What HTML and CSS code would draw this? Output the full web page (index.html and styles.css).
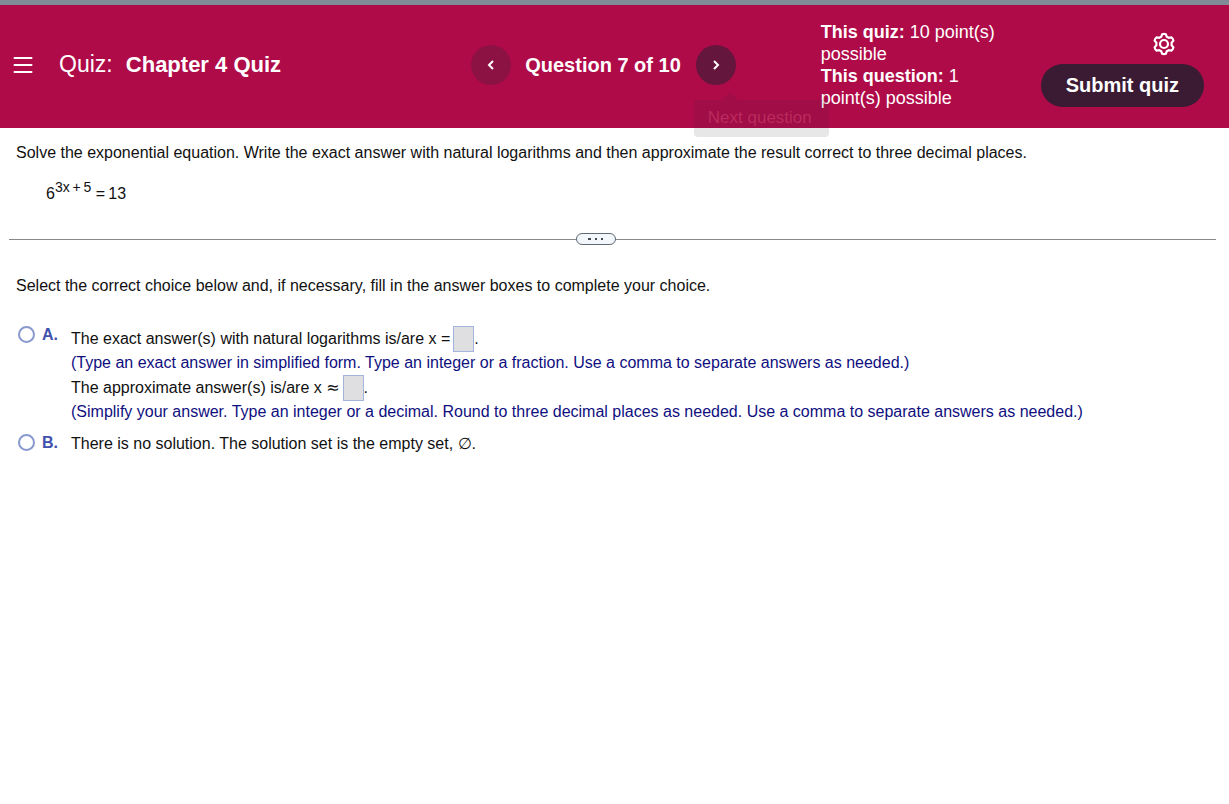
FILE: index.html
```html
<!DOCTYPE html>
<html lang="en">
<head>
<meta charset="utf-8">
<meta name="viewport" content="width=device-width, initial-scale=1">
<title>Chapter 4 Quiz</title>
<link rel="stylesheet" href="styles.css">
</head>
<body>
<header class="header">
  <div class="heading">
    <button class="icon-button menu" type="button" aria-label="Menu">
      <svg width="20" height="18" viewBox="0 0 20 18" fill="none" stroke="currentColor" stroke-width="2" stroke-linecap="round"><path d="M1.5 2h17M1.5 9h17M1.5 16h17"/></svg>
    </button>
    <h1 class="title"><span class="kind">Quiz:</span> Chapter 4 Quiz</h1>
  </div>
  <nav class="pager" aria-label="Questions">
    <button class="round previous" type="button" aria-label="Previous question">
      <svg width="10" height="12" viewBox="0 0 10 12" fill="none" stroke="currentColor" stroke-width="2"><path d="M7 2 3 6l4 4"/></svg>
    </button>
    <span class="position">Question 7 of 10</span>
    <div class="next-wrap">
      <button class="round" type="button" aria-label="Next question">
        <svg width="10" height="12" viewBox="0 0 10 12" fill="none" stroke="currentColor" stroke-width="2"><path d="m3 2 4 4-4 4"/></svg>
      </button>
      <div class="tooltip" role="tooltip">Next question</div>
    </div>
  </nav>
  <div class="side">
    <div class="points">
      <div><b>This quiz:</b> 10 point(s) possible</div>
      <div><b>This question:</b> 1 point(s) possible</div>
    </div>
    <div class="actions">
      <button class="icon-button settings" type="button" aria-label="Settings">
        <svg width="24" height="24" viewBox="0 0 24 24" fill="none" stroke="currentColor" stroke-width="2.2" stroke-linejoin="round"><circle cx="12" cy="12" r="4"/><path d="M10.2 2.2Q12 1.6 13.8 2.2L14.8 4.8 16.6 5.8 19.4 5.4Q21 6.6 21.4 8.6L19.6 10.8V13.2L21.4 15.4Q21 17.4 19.4 18.6L16.6 18.2 14.8 19.2 13.8 21.8Q12 22.4 10.2 21.8L9.2 19.2 7.4 18.2 4.6 18.6Q3 17.4 2.6 15.4L4.4 13.2V10.8L2.6 8.6Q3 6.6 4.6 5.4L7.4 5.8 9.2 4.8Z"/></svg>
      </button>
      <button class="submit" type="button">Submit quiz</button>
    </div>
  </div>
</header>
<main>
  <section class="problem">
    <p>Solve the exponential equation. Write the exact answer with natural logarithms and then approximate the result correct to three decimal places.</p>
    <p class="equation">6<sup>3x&#8201;+&#8201;5</sup> =&#8201;13</p>
  </section>
  <div class="divider">
    <button class="handle" type="button" aria-label="Resize panels">
      <svg width="16" height="4" viewBox="0 0 16 4" fill="currentColor"><rect x="0" y="1" width="3" height="2"/><rect x="7" y="1" width="2" height="2"/><rect x="13" y="1" width="2" height="2"/></svg>
    </button>
  </div>
  <section class="answers">
    <p>Select the correct choice below and, if necessary, fill in the answer boxes to complete your choice.</p>
    <div class="choice">
      <input class="radio" type="radio" name="choice" id="a">
      <label class="letter" for="a">A.</label>
      <div class="body">
        <div class="entry"><label for="exact">The exact answer(s) with natural logarithms is/are x =</label><input class="blank" id="exact" type="text">.</div>
        <div class="hint">(Type an exact answer in simplified form. Type an integer or a fraction. Use a comma to separate answers as needed.)</div>
        <div class="entry"><label for="approx">The approximate answer(s) is/are x <span class="approx">≈</span></label><input class="blank" id="approx" type="text">.</div>
        <div class="hint">(Simplify your answer. Type an integer or a decimal. Round to three decimal places as needed. Use a comma to separate answers as needed.)</div>
      </div>
    </div>
    <div class="choice">
      <input class="radio" type="radio" name="choice" id="b">
      <label class="letter" for="b">B.</label>
      <div class="body">There is no solution. The solution set is the empty set, ∅.</div>
    </div>
  </section>
</main>
</body>
</html>
```
FILE: styles.css
```css
* {
  box-sizing: border-box;
}
body {
  margin: 0;
  background: #fff;
  color: #111;
  font: 16px/22px "Liberation Sans", Arial, sans-serif;
}
p {
  margin: 0;
}
button {
  padding: 0;
  border: 0;
  color: inherit;
  font: inherit;
  cursor: pointer;
}
svg {
  display: block;
}
.header {
  display: grid;
  grid-template-columns: 1fr auto 1fr;
  align-items: center;
  padding: 16px 25px 19px 3px;
  border-top: 5px solid #808b98;
  background: #b00b49;
  color: #fff;
}
.heading {
  display: flex;
  align-items: center;
}
.icon-button {
  background: none;
}
.menu {
  padding: 9px 10px;
}
.title {
  margin: 0 0 2px 16px;
  font-size: 22px;
  line-height: 26px;
}
.kind {
  margin-right: 7px;
  font-size: 23px;
  font-weight: 400;
}
.pager {
  display: flex;
  align-items: center;
}
.round {
  display: grid;
  place-items: center;
  width: 40px;
  height: 40px;
  border-radius: 50%;
  background: #65163d;
}
.previous {
  background: #8d1244;
}
.position {
  margin: 0 15px 0 14px;
  font-size: 20px;
  font-weight: 700;
}
.next-wrap {
  position: relative;
}
.tooltip {
  position: absolute;
  top: 55px;
  left: -2px;
  padding: 7px 17px 8px 14px;
  border-radius: 4px;
  background: rgba(50, 40, 50, 0.11);
  color: #b92b5d;
  font-size: 17px;
  line-height: 22px;
  white-space: nowrap;
}
.tooltip::before {
  content: "";
  position: absolute;
  bottom: 100%;
  left: 28px;
  border: 8px solid transparent;
  border-top: 0;
  border-bottom-color: rgba(50, 40, 50, 0.11);
}
.side {
  display: flex;
  justify-content: flex-end;
  gap: 40px;
}
.points {
  width: 180px;
  font-size: 18px;
}
.actions {
  display: flex;
  flex-direction: column;
  align-items: flex-end;
  padding-top: 11px;
}
.settings {
  margin-right: 28px;
}
.submit {
  margin-top: 8px;
  padding: 10px 25px 11px;
  border-radius: 22px;
  background: #3b1b34;
  font-size: 20px;
  font-weight: 700;
}
.problem {
  padding: 14px 16px 0;
}
.equation {
  padding: 19px 30px 0;
}
.equation sup {
  font-size: 14px;
  line-height: 0;
  vertical-align: 7px;
}
.divider {
  display: flex;
  align-items: center;
  margin: 28px 13px 0 9px;
}
.divider::before,
.divider::after {
  content: "";
  flex: 1;
  height: 1px;
  background: #888;
}
.divider::after {
  flex-grow: 1.06;
}
.handle {
  display: grid;
  place-items: center;
  width: 40px;
  height: 12px;
  border: 1px solid #5f6874;
  border-radius: 6px;
  background: #f2f7fb;
  color: #444b55;
}
.answers {
  padding: 30px 16px 0;
}
.choice {
  display: grid;
  grid-template-columns: 26px 29px 1fr;
  align-items: start;
  margin-top: 9px;
}
p + .choice {
  margin-top: 27px;
}
.radio {
  appearance: none;
  width: 17px;
  height: 17px;
  margin: 2px;
  border: 2px solid #8999cf;
  border-radius: 50%;
  background: #fff;
}
.letter {
  color: #3f51ad;
  font-weight: 700;
}
.body {
  padding-top: 1px;
}
.entry {
  display: flex;
  align-items: center;
  height: 27px;
}
.approx {
  font-family: "DejaVu Sans", sans-serif;
}
.blank {
  width: 21px;
  height: 26px;
  margin-left: 3px;
  padding: 0;
  border: 1px solid #a5b4df;
  background: #dfdfe1;
  font: inherit;
}
.hint {
  color: #0f0f80;
}
```
